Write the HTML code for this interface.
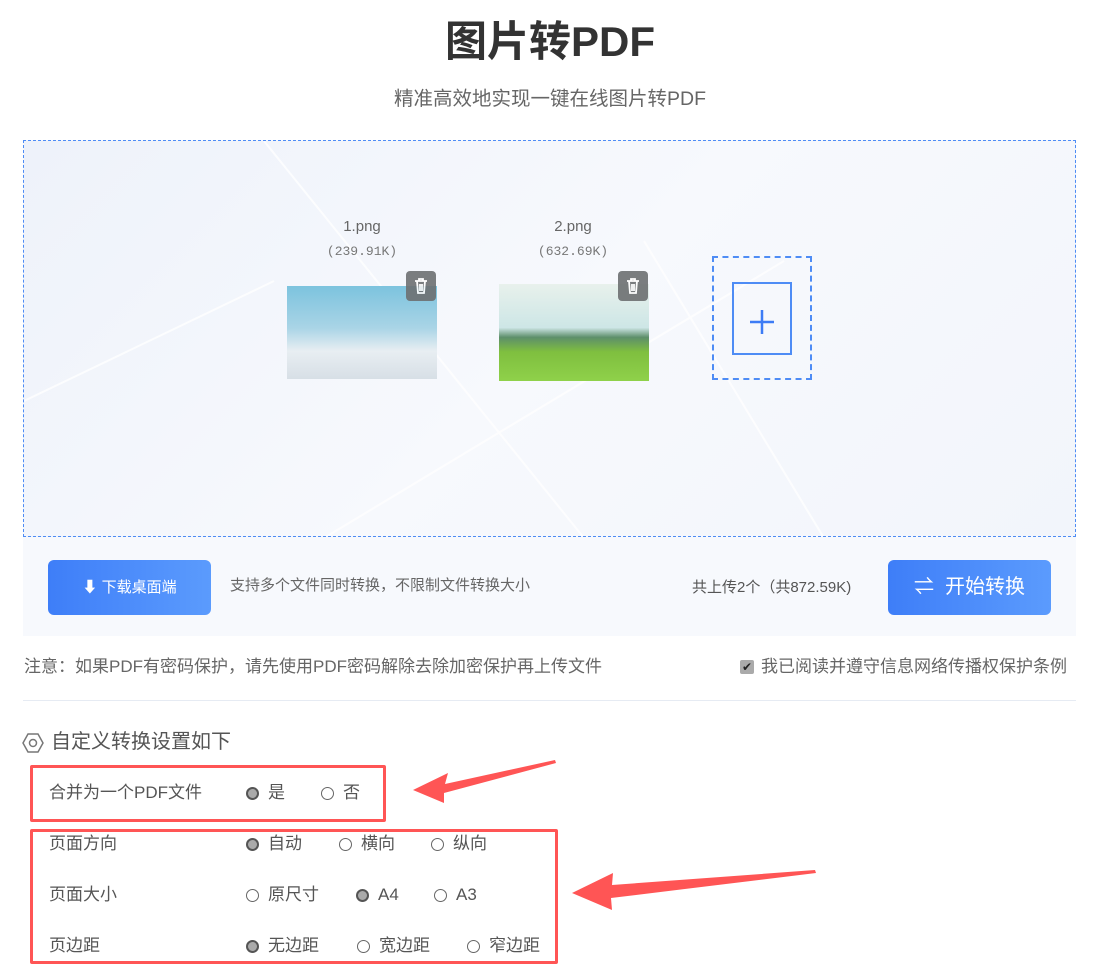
<!DOCTYPE html>
<html><head><meta charset="utf-8"><style>
*{margin:0;padding:0;box-sizing:border-box}
body{width:1100px;height:964px;background:#fff;font-family:"Liberation Sans","Noto Sans CJK SC",sans-serif;position:relative;overflow:hidden;color:#555}
.a{position:absolute;white-space:nowrap}
.r{position:absolute;width:13px;height:13px;border:1px solid #666;border-radius:50%;background:#fff}
.r.on{background:#aaa;border:2px solid #555}
.t{font-size:17px;color:#555;line-height:20px}
</style></head><body>
<div class="a" style="left:0;width:1100px;text-align:center;top:8px;font-size:42px;font-weight:bold;color:#333">图片转PDF</div>
<div class="a" style="left:0;width:1100px;text-align:center;top:82px;font-size:19.5px;color:#666">精准高效地实现一键在线图片转PDF</div>

<div class="a" style="left:23px;top:140px;width:1053px;height:397px;border:1px dashed #4e8cf5;background:linear-gradient(135deg,#eef2fa 0%,#f7f9fd 50%,#f2f5fb 100%);overflow:hidden">
<svg width="1053" height="397" style="position:absolute;left:0;top:0"><g stroke="#fff" stroke-width="2" opacity=".8"><line x1="240" y1="0" x2="560" y2="397"/><line x1="0" y1="260" x2="250" y2="140"/><line x1="300" y1="397" x2="760" y2="120"/><line x1="620" y1="100" x2="800" y2="397"/></g></svg>
</div>
<div class="a" style="left:312px;top:218px;width:100px;text-align:center;font-size:15px;color:#666">1.png</div>
<div class="a" style="left:312px;top:244px;width:100px;text-align:center;font-size:13px;color:#777;font-family:'Liberation Mono',monospace">(239.91K)</div>
<div class="a" style="left:523px;top:218px;width:100px;text-align:center;font-size:15px;color:#666">2.png</div>
<div class="a" style="left:523px;top:244px;width:100px;text-align:center;font-size:13px;color:#777;font-family:'Liberation Mono',monospace">(632.69K)</div>
<div class="a" style="left:287px;top:286px;width:150px;height:93px;background:linear-gradient(180deg,#7cc3de 0%,#a9d4e6 45%,#e8eef2 70%,#d7dfe6 100%)"></div>
<div class="a" style="left:499px;top:284px;width:150px;height:97px;background:linear-gradient(180deg,#e8f1ec 0%,#cde6e6 45%,#5d8f6a 55%,#7fbf3f 70%,#8fd14a 100%)"></div>
<div class="a" style="left:406px;top:271px;width:30px;height:30px;background:#6d7072;border-radius:4px;opacity:.9"><svg width="30" height="30"><g fill="none" stroke="#fff" stroke-width="1.8"><path d="M9 10h12M13 10V8h4v2M11 10l1 12h6l1-12M14 13v7M16 13v7"/></g></svg></div>
<div class="a" style="left:618px;top:271px;width:30px;height:30px;background:#6d7072;border-radius:4px;opacity:.9"><svg width="30" height="30"><g fill="none" stroke="#fff" stroke-width="1.8"><path d="M9 10h12M13 10V8h4v2M11 10l1 12h6l1-12M14 13v7M16 13v7"/></g></svg></div>
<div class="a" style="left:712px;top:256px;width:100px;height:124px;border:2px dashed #4e8cf5"></div>
<div class="a" style="left:732px;top:282px;width:60px;height:73px;border:2px solid #4e8cf5"><svg width="56" height="69"><path d="M16 38h24M28 26v24" stroke="#3d7cf5" stroke-width="2.5"/></svg></div>

<div class="a" style="left:23px;top:537px;width:1053px;height:99px;background:#f7f9fd"></div>
<div class="a" style="left:48px;top:560px;width:163px;height:55px;border-radius:6px;background:linear-gradient(90deg,#3e7ef8,#5b9bfd);color:#fff;font-size:15px;line-height:55px;text-align:center"><span style="font-size:15px">⬇</span> 下载桌面端</div>
<div class="a" style="left:230px;top:576px;font-size:15px;color:#666;line-height:20px">支持多个文件同时转换，不限制文件转换大小</div>
<div class="a" style="left:692px;top:578px;font-size:15px;color:#555;line-height:20px">共上传2个（共872.59K)</div>
<div class="a" style="left:888px;top:560px;width:163px;height:55px;border-radius:6px;background:linear-gradient(90deg,#3e7ef8,#5b9bfd);color:#fff;font-size:20px;line-height:55px;text-align:center">⇌&nbsp; 开始转换</div>

<div class="a t" style="left:24px;top:657px;color:#666">注意：如果PDF有密码保护，请先使用PDF密码解除去除加密保护再上传文件</div>
<div class="a" style="left:740px;top:660px;width:14px;height:14px;background:#aaa;border-radius:2px;color:#222;font-size:12px;line-height:14px;text-align:center">✔</div>
<div class="a t" style="left:761px;top:657px;color:#666">我已阅读并遵守信息网络传播权保护条例</div>
<div class="a" style="left:23px;top:700px;width:1053px;height:1px;background:#e6ebf3"></div>

<svg class="a" style="left:22px;top:732px" width="22" height="22"><path d="M6 2h10l5 9-5 9H6l-5-9z" fill="none" stroke="#777" stroke-width="1.5"/><circle cx="11" cy="11" r="3.5" fill="none" stroke="#777" stroke-width="1.5"/></svg>
<div class="a" style="left:51px;top:730px;font-size:20px;color:#555;line-height:24px">自定义转换设置如下</div>

<div class="a" style="left:30px;top:765px;width:356px;height:57px;border:3px solid #f55;border-radius:2px"></div>
<div class="a" style="left:30px;top:829px;width:528px;height:135px;border:3px solid #f55;border-radius:2px"></div>
<svg class="a" style="left:0;top:0" width="1100" height="964"><polygon points="555,760 445,784 448,773 413,790 444,803 444,793 556,763" fill="#f55"/><polygon points="815,870 612,885 613,873 572,893 612,910 611,898 816,873" fill="#f55"/></svg>

<div class="a t" style="left:49px;top:783px">合并为一个PDF文件</div>
<div class="r on" style="left:246px;top:787px"></div><div class="a t" style="left:268px;top:783px">是</div>
<div class="r" style="left:321px;top:787px"></div><div class="a t" style="left:343px;top:783px">否</div>

<div class="a t" style="left:49px;top:834px">页面方向</div>
<div class="r on" style="left:246px;top:838px"></div><div class="a t" style="left:268px;top:834px">自动</div>
<div class="r" style="left:339px;top:838px"></div><div class="a t" style="left:361px;top:834px">横向</div>
<div class="r" style="left:431px;top:838px"></div><div class="a t" style="left:453px;top:834px">纵向</div>

<div class="a t" style="left:49px;top:885px">页面大小</div>
<div class="r" style="left:246px;top:889px"></div><div class="a t" style="left:268px;top:885px">原尺寸</div>
<div class="r on" style="left:356px;top:889px"></div><div class="a t" style="left:378px;top:885px">A4</div>
<div class="r" style="left:434px;top:889px"></div><div class="a t" style="left:456px;top:885px">A3</div>

<div class="a t" style="left:49px;top:936px">页边距</div>
<div class="r on" style="left:246px;top:940px"></div><div class="a t" style="left:268px;top:936px">无边距</div>
<div class="r" style="left:357px;top:940px"></div><div class="a t" style="left:379px;top:936px">宽边距</div>
<div class="r" style="left:467px;top:940px"></div><div class="a t" style="left:489px;top:936px">窄边距</div>
</body></html>
